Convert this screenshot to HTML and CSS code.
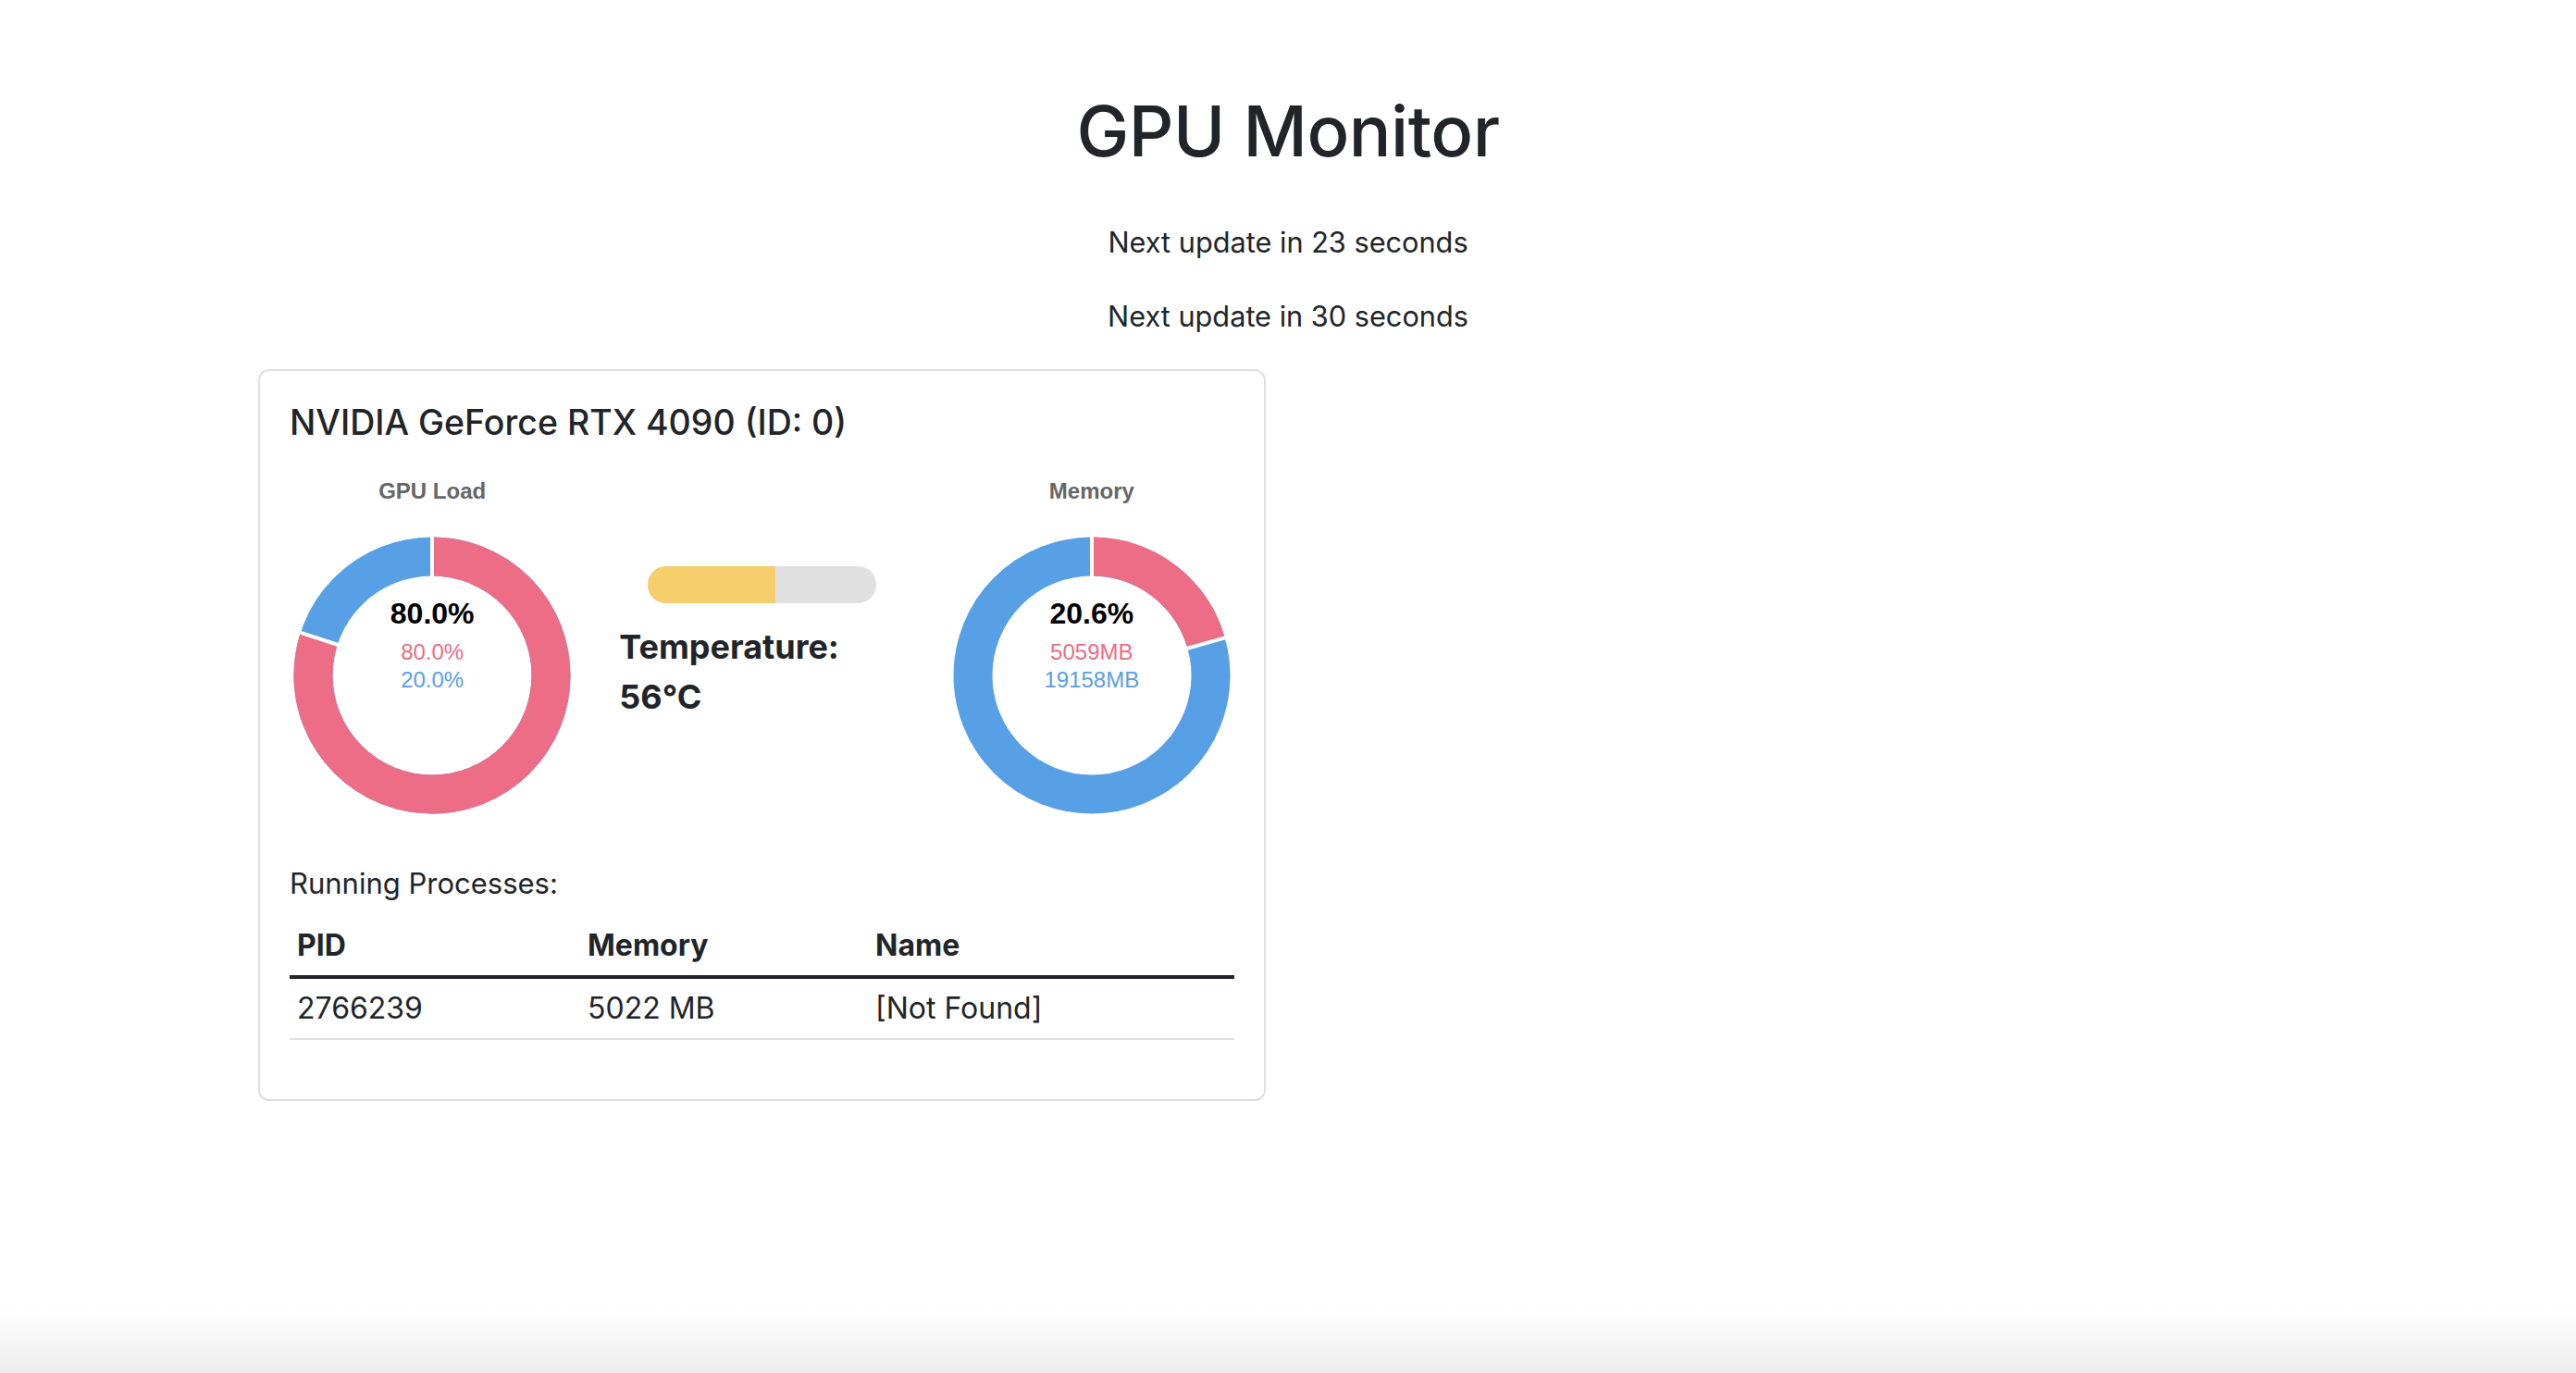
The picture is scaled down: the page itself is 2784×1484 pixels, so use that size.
FILE: index.html
```html
<!DOCTYPE html>
<html lang="en">
<head>
<meta charset="utf-8">
<title>GPU Monitor</title>
<link rel="stylesheet" href="styles.css">
</head>
<body>
<div class="container">
  <h1 class="page-title">GPU Monitor</h1>
  <p class="update">Next update in 23 seconds</p>
  <p class="update">Next update in 30 seconds</p>
  <div class="row">
    <div class="col-half">
      <div class="card">
        <h5 class="card-title">NVIDIA GeForce RTX 4090 (ID: 0)</h5>
        <div class="chart-row">
          <div class="chart-col">
            <div class="chart-title">GPU Load</div>
            <div class="donut">
              <svg width="300" height="300" viewBox="0 0 300 300">
                <circle cx="150" cy="150" r="128.5" fill="none" stroke="#57a0e5" stroke-width="42"/>
                <circle cx="150" cy="150" r="128.5" fill="none" stroke="#ec6d85" stroke-width="42" stroke-dasharray="645.9 2000" transform="rotate(-90 150 150)"/>
                <line x1="150" y1="48" x2="150" y2="-4" stroke="#fff" stroke-width="4"/>
                <line x1="150" y1="48" x2="150" y2="-4" stroke="#fff" stroke-width="4" transform="rotate(288 150 150)"/>
              </svg>
              <div class="donut-label">
                <div class="dl-main">80.0%</div>
                <div class="dl-pink">80.0%</div>
                <div class="dl-blue">20.0%</div>
              </div>
            </div>
          </div>
          <div class="chart-col temp-col">
            <div class="temp-bar"><div class="temp-fill" style="width:56%"></div></div>
            <div class="temp-text">Temperature: 56°C</div>
          </div>
          <div class="chart-col">
            <div class="chart-title">Memory</div>
            <div class="donut">
              <svg width="300" height="300" viewBox="0 0 300 300">
                <circle cx="150" cy="150" r="128.5" fill="none" stroke="#57a0e5" stroke-width="42"/>
                <circle cx="150" cy="150" r="128.5" fill="none" stroke="#ec6d85" stroke-width="42" stroke-dasharray="166.3 2000" transform="rotate(-90 150 150)"/>
                <line x1="150" y1="48" x2="150" y2="-4" stroke="#fff" stroke-width="4"/>
                <line x1="150" y1="48" x2="150" y2="-4" stroke="#fff" stroke-width="4" transform="rotate(74.2 150 150)"/>
              </svg>
              <div class="donut-label">
                <div class="dl-main">20.6%</div>
                <div class="dl-pink">5059MB</div>
                <div class="dl-blue">19158MB</div>
              </div>
            </div>
          </div>
        </div>
        <h6 class="proc-title">Running Processes:</h6>
        <table class="proc-table">
          <thead>
            <tr><th class="c-pid">PID</th><th class="c-mem">Memory</th><th>Name</th></tr>
          </thead>
          <tbody>
            <tr><td>2766239</td><td>5022 MB</td><td>[Not Found]</td></tr>
          </tbody>
        </table>
      </div>
    </div>
  </div>
</div>
<div class="window-fade"></div>
</body>
</html>
```
FILE: styles.css
```css
* { box-sizing: border-box; }
html, body { margin: 0; padding: 0; background: #fff; }
body {
  font-family: Inter, "Noto Sans", "Liberation Sans", sans-serif;
  font-size: 32px;
  line-height: 1.5;
  color: #212529;
}
.container {
  max-width: 2274px;
  margin: 0 auto;
  padding: 0 24px;
}
.page-title {
  margin: 96px 0 51px;
  font-size: 76px;
  font-weight: 500;
  line-height: 91px;
  text-align: center;
  letter-spacing: -0.5px;
}
.update {
  margin: 0 0 32px;
  font-size: 30.7px;
  line-height: 48px;
  text-align: center;
}
.update + .update { margin-bottom: 33px; }
.row { display: flex; margin: 0 -24px; }
.col-half { width: 50%; padding: 0 24px; }
.card {
  border: 2px solid #dfdfdf;
  border-radius: 12px;
  padding: 32px;
}
.card-title {
  margin: 0 0 16px;
  font-size: 37.5px;
  font-weight: 500;
  line-height: 48px;
}
.chart-row { display: flex; margin: 0 -24px; height: 407px; }
.chart-col { width: 33.3333%; padding: 0 24px; display: flex; flex-direction: column; align-items: center; }
.chart-title {
  padding-top: 19px;
  font-family: "Liberation Sans", Arial, sans-serif;
  font-size: 24px;
  font-weight: 700;
  line-height: 29px;
  color: #666;
}
.donut { position: relative; width: 300px; height: 300px; margin-top: 35px; }
.donut svg { display: block; }
.donut-label {
  position: absolute;
  left: 0; right: 0; top: 63px;
  text-align: center;
  font-family: "Liberation Sans", Arial, sans-serif;
}
.dl-main { font-size: 32px; font-weight: 700; line-height: 40px; margin-bottom: 7px; color: #000; }
.dl-pink, .dl-blue { font-size: 24px; line-height: 30px; }
.dl-pink { color: #ec6d85; }
.dl-blue { color: #57a0e5; }
.temp-col { align-items: stretch; }
.temp-bar {
  width: 80%;
  height: 40px;
  margin: 115px auto 0;
  background: #e0e0e0;
  border-radius: 20px;
  overflow: hidden;
}
.temp-fill { height: 100%; background: #f6cf6c; }
.temp-text {
  margin-top: 20px;
  font-size: 36px;
  font-weight: 700;
  line-height: 54px;
}
.proc-title {
  margin: 32px 0 16px;
  font-size: 31px;
  font-weight: 400;
  line-height: 38px;
}
.proc-table {
  width: 100%;
  border-collapse: collapse;
  margin-bottom: 32px;
}
.proc-table th, .proc-table td {
  padding: 8px;
  text-align: left;
  line-height: 48px;
  border-bottom: 2px solid #dee2e6;
}
.proc-table th { font-weight: 700; border-bottom: 4px solid #212529; }
.c-pid { width: 314px; }
.c-mem { width: 311px; }
.window-fade {
  position: fixed;
  left: 0; right: 0; bottom: 0;
  height: 70px;
  background: linear-gradient(to bottom, rgba(236,236,236,0), #ececec);
  pointer-events: none;
}
```
